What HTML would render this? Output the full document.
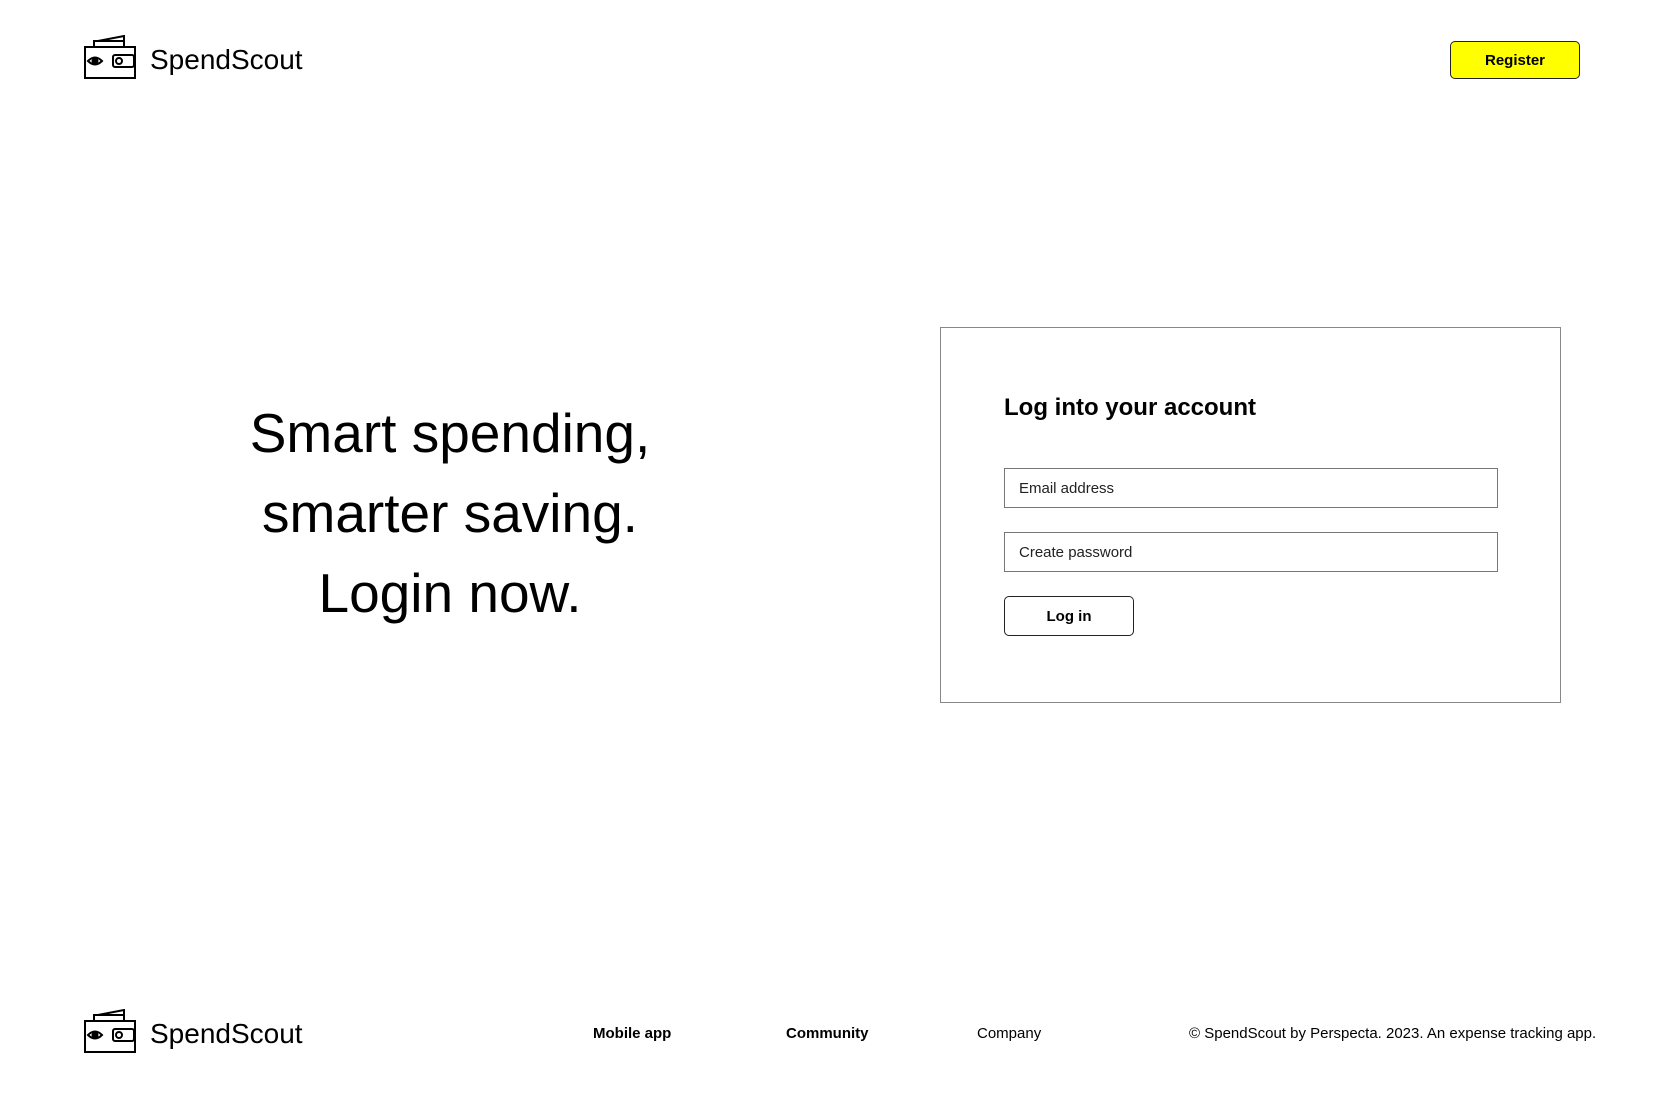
<!DOCTYPE html>
<html><head><meta charset="utf-8"><style>
*{margin:0;padding:0;box-sizing:border-box}
body{width:1680px;height:1100px;background:#fff;font-family:"Liberation Sans",sans-serif;color:#000;position:relative;overflow:hidden}
.logo{position:absolute;left:84px;display:flex;align-items:center}
.logo span{font-size:28px;margin-left:14px;position:relative;top:3px}
.reg{position:absolute;left:1450px;top:41px;width:130px;height:38px;background:#ff0;border:1.5px solid #222;border-radius:5px;font-weight:bold;font-size:15px;display:flex;align-items:center;justify-content:center}
.hero{position:absolute;left:150px;width:600px;top:393px;text-align:center;font-size:55px;line-height:80px}
.card{position:absolute;left:940px;top:327px;width:621px;height:376px;border:1px solid #888}
.card h2{position:absolute;left:63px;top:66px;font-size:24px;font-weight:bold}
.inp{position:absolute;left:63px;width:494px;height:40px;border:1px solid #777;font-size:15px;padding-left:14px;display:flex;align-items:center;color:#222}
.btn{position:absolute;left:63px;top:268px;width:130px;height:40px;border:1.5px solid #222;border-radius:5px;font-weight:bold;font-size:15px;display:flex;align-items:center;justify-content:center}
.f{position:absolute;top:1025px;font-size:15px}
</style></head><body>
<div class="logo" style="top:35px">
<svg width="52" height="44" viewBox="0 0 52 44" fill="none" stroke="#000" stroke-width="2"><path d="M10 12V6H40V12"/><path d="M14 6L40 1V6"/><rect x="1" y="12" width="50" height="31"/><path d="M4 26Q11 19 18 26Q11 33 4 26Z"/><circle cx="11" cy="26" r="2.5" fill="#000"/><rect x="29" y="20" width="21" height="12" rx="2"/><circle cx="35" cy="26" r="3"/></svg>
<span>SpendScout</span></div>
<div class="reg">Register</div>
<div class="hero">Smart spending,<br>smarter saving.<br>Login now.</div>
<div class="card">
<h2>Log into your account</h2>
<div class="inp" style="top:140px">Email address</div>
<div class="inp" style="top:204px">Create password</div>
<div class="btn">Log in</div>
</div>
<div class="logo" style="top:1009px">
<svg width="52" height="44" viewBox="0 0 52 44" fill="none" stroke="#000" stroke-width="2"><path d="M10 12V6H40V12"/><path d="M14 6L40 1V6"/><rect x="1" y="12" width="50" height="31"/><path d="M4 26Q11 19 18 26Q11 33 4 26Z"/><circle cx="11" cy="26" r="2.5" fill="#000"/><rect x="29" y="20" width="21" height="12" rx="2"/><circle cx="35" cy="26" r="3"/></svg>
<span>SpendScout</span></div>
<div class="f" style="left:593px;font-weight:bold">Mobile app</div>
<div class="f" style="left:786px;font-weight:bold">Community</div>
<div class="f" style="left:977px">Company</div>
<div class="f" style="left:1189px">© SpendScout by Perspecta. 2023. An expense tracking app.</div>
</body></html>
